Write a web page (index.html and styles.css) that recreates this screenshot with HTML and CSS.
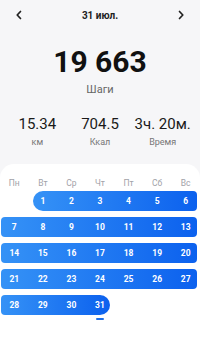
FILE: index.html
```html
<!DOCTYPE html>
<html lang="ru">
<head>
<meta charset="utf-8">
<link rel="stylesheet" href="styles.css">
</head>
<body>
<div class="screen">
  <header class="top">
    <svg class="chev" width="8" height="10" viewBox="0 0 8 10"><polyline points="5.5,1.5 2.2,5 5.5,8.5" fill="none" stroke="#222" stroke-width="1.7" stroke-linecap="round" stroke-linejoin="round"/></svg>
    <div class="date">31 июл.</div>
    <svg class="chev" width="8" height="10" viewBox="0 0 8 10"><polyline points="2.5,1.5 5.8,5 2.5,8.5" fill="none" stroke="#222" stroke-width="1.7" stroke-linecap="round" stroke-linejoin="round"/></svg>
  </header>
  <div class="steps">19 663</div>
  <div class="steps-label">Шаги</div>
  <div class="stats">
    <div class="stat"><div class="val">15.34</div><div class="lbl">км</div></div>
    <div class="stat"><div class="val">704.5</div><div class="lbl">Ккал</div></div>
    <div class="stat"><div class="val">3ч. 20м.</div><div class="lbl">Время</div></div>
  </div>
  <section class="card">
    <div class="weekdays">
      <span class="wd">Пн</span><span class="wd">Вт</span><span class="wd">Ср</span><span class="wd">Чт</span><span class="wd">Пт</span><span class="wd">Сб</span><span class="wd">Вс</span>
    </div>
    <div class="cal">
      <div class="pill r1 first"></div>
      <span class="d r1 c2">1</span><span class="d r1 c3">2</span><span class="d r1 c4">3</span><span class="d r1 c5">4</span><span class="d r1 c6">5</span><span class="d r1 c7">6</span>

      <div class="pill r2 full"></div>
      <span class="d r2 c1">7</span><span class="d r2 c2">8</span><span class="d r2 c3">9</span><span class="d r2 c4">10</span><span class="d r2 c5">11</span><span class="d r2 c6">12</span><span class="d r2 c7">13</span>

      <div class="pill r3 full"></div>
      <span class="d r3 c1">14</span><span class="d r3 c2">15</span><span class="d r3 c3">16</span><span class="d r3 c4">17</span><span class="d r3 c5">18</span><span class="d r3 c6">19</span><span class="d r3 c7">20</span>

      <div class="pill r4 full"></div>
      <span class="d r4 c1">21</span><span class="d r4 c2">22</span><span class="d r4 c3">23</span><span class="d r4 c4">24</span><span class="d r4 c5">25</span><span class="d r4 c6">26</span><span class="d r4 c7">27</span>

      <div class="pill r5 last"></div>
      <span class="d r5 c1">28</span><span class="d r5 c2">29</span><span class="d r5 c3">30</span><span class="d r5 c4">31</span>
    </div>
    <div class="marks">
      <span class="mark"></span>
    </div>
  </section>
</div>
</body>
</html>
```

FILE: styles.css
```css
html, body {
  margin: 0;
  padding: 0;
}
body {
  background: #f6f6f8;
  font-family: Roboto, "Noto Sans", "Liberation Sans", sans-serif;
  color: #111;
}
.screen {
  width: 200px;
  height: 338px;
  overflow: hidden;
  display: flex;
  flex-direction: column;
}
.top {
  height: 30px;
  display: flex;
  align-items: center;
  justify-content: space-between;
  padding: 0 15px;
}
.chev {
  display: block;
}
.date {
  font-size: 10px;
  font-weight: 700;
  color: #222;
}
.steps {
  margin-top: 17px;
  font-size: 30px;
  line-height: 30px;
  font-weight: 700;
  text-align: center;
  color: #111;
}
.steps-label {
  margin-top: 6px;
  font-size: 11px;
  line-height: 13px;
  text-align: center;
  color: #666;
}
.stats {
  margin-top: 19px;
  padding: 0 6px;
  display: grid;
  grid-template-columns: repeat(3, 1fr);
}
.stat {
  text-align: center;
}
.val {
  font-size: 15px;
  line-height: 18px;
  color: #1a1a1a;
  white-space: nowrap;
}
.lbl {
  margin-top: 3px;
  font-size: 9px;
  line-height: 12px;
  color: #777;
}
.card {
  margin-top: 16px;
  flex: 1;
  background: #ffffff;
  border-radius: 14px 14px 0 0;
  padding-top: 13px;
}
.weekdays {
  display: grid;
  grid-template-columns: repeat(7, 1fr);
  margin-bottom: 2px;
}
.wd {
  font-size: 8.5px;
  line-height: 12px;
  text-align: center;
  color: #a2a2a8;
}
.cal {
  display: grid;
  grid-template-columns: repeat(7, 1fr);
  grid-auto-rows: 20px;
  row-gap: 6px;
}
.pill {
  background: linear-gradient(90deg, #3592f6 0%, #0c61ee 100%);
  border-radius: 4px;
}
.r1 { grid-row: 1; }
.r2 { grid-row: 2; }
.r3 { grid-row: 3; }
.r4 { grid-row: 4; }
.r5 { grid-row: 5; }
.first {
  grid-column: 2 / 8;
  margin-left: 4.5px;
  margin-right: 3px;
  border-radius: 10px 4px 4px 10px;
}
.full {
  grid-column: 1 / 8;
  margin-left: 0.5px;
  margin-right: 3px;
}
.last {
  grid-column: 1 / 5;
  margin-left: 0.5px;
  margin-right: 4px;
  border-radius: 4px 10px 10px 4px;
}
.d {
  font-size: 8.5px;
  font-weight: 700;
  line-height: 20px;
  text-align: center;
  color: #ffffff;
  z-index: 1;
}
.c1 { grid-column: 1; }
.c2 { grid-column: 2; }
.c3 { grid-column: 3; }
.c4 { grid-column: 4; }
.c5 { grid-column: 5; }
.c6 { grid-column: 6; }
.c7 { grid-column: 7; }
.marks {
  display: grid;
  grid-template-columns: repeat(7, 1fr);
  margin-top: 3px;
}
.mark {
  grid-column: 4;
  justify-self: center;
  width: 8px;
  height: 2px;
  border-radius: 1px;
  background: #1f6fe8;
}
```
